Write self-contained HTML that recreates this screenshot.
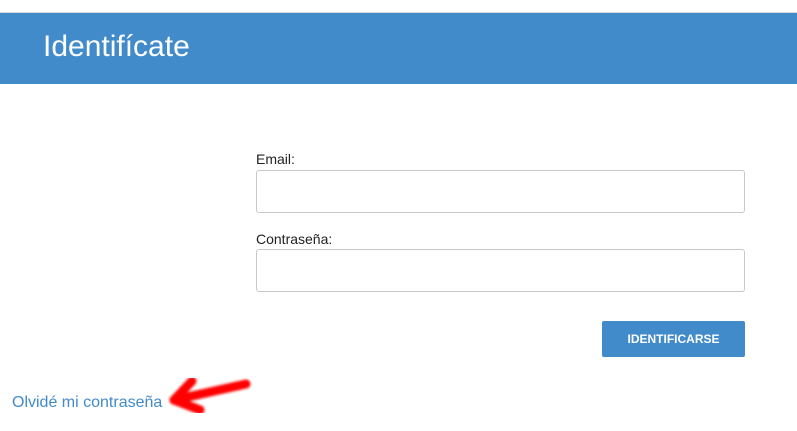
<!DOCTYPE html>
<html><head><meta charset="utf-8"><style>
body{margin:0;width:797px;height:431px;background:#fff;position:relative;overflow:hidden;font-family:"Liberation Sans",sans-serif;}
.hdr{position:absolute;left:0;top:12px;width:797px;height:71px;background:#418bca;border-top:1px solid #ddd;}
.hdr h1{margin:0;position:absolute;left:43px;top:17px;font-size:30px;font-weight:normal;color:#fff;}
label{position:absolute;left:256px;font-size:14px;color:#222;}
.in{position:absolute;left:256px;width:487px;height:41px;border:1px solid #c8c8c8;border-radius:3px;}
.btn{position:absolute;left:602px;top:321px;width:143px;height:36px;background:#418bca;border-radius:2px;color:#fff;font-weight:bold;font-size:12px;text-align:center;line-height:36px;}
.lnk{position:absolute;left:12px;top:394px;font-size:16px;color:#418bca;}
</style></head><body>
<div class="hdr"><h1>Identifícate</h1></div>
<label style="top:151px">Email:</label>
<div class="in" style="top:170px"></div>
<label style="top:231px">Contraseña:</label>
<div class="in" style="top:249px"></div>
<div class="btn">IDENTIFICARSE</div>
<div class="lnk">Olvidé mi contraseña</div>
<svg style="position:absolute;left:0;top:0" width="797" height="431"><defs><filter id="b"><feGaussianBlur stdDeviation="1.2"/></filter></defs>
<g filter="url(#b)" stroke="#f00" stroke-linecap="round" fill="none" stroke-width="9">
<path d="M174 400 L246 384"/><path d="M174 400 L192 381"/><path d="M174 400 L200 410"/></g></svg>
</body></html>
